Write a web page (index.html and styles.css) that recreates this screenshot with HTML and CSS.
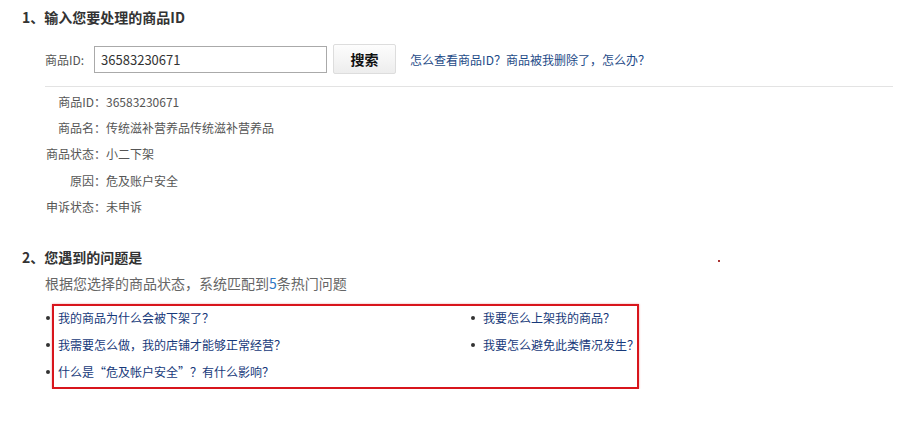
FILE: index.html
```html
<!DOCTYPE html>
<html lang="zh-CN">
<head>
    <meta charset="UTF-8">
    <meta name="viewport" content="width=device-width, initial-scale=1.0">
    <title>商品申诉</title>
    <link rel="stylesheet" href="styles.css">
</head>
<body>
    <div class="page">
        <!-- step 1: search by item id -->
        <h2 class="step">1、输入您要处理的商品ID</h2>

        <form class="search-row" onsubmit="return false">
            <label class="search-label" for="itemId">商品ID:</label>
            <input class="search-input" type="text" id="itemId" value="36583230671">
            <button class="search-btn" type="submit">搜索</button>
            <a class="help" href="#">怎么查看商品ID？</a>
            <a class="help" href="#">商品被我删除了，怎么办？</a>
        </form>

        <!-- item details -->
        <div class="info">
            <div class="info-row"><span class="info-key">商品ID：</span><span class="info-val">36583230671</span></div>
            <div class="info-row"><span class="info-key">商品名：</span><span class="info-val">传统滋补营养品传统滋补营养品</span></div>
            <div class="info-row"><span class="info-key">商品状态：</span><span class="info-val">小二下架</span></div>
            <div class="info-row"><span class="info-key">原因：</span><span class="info-val">危及账户安全</span></div>
            <div class="info-row"><span class="info-key">申诉状态：</span><span class="info-val">未申诉</span></div>
        </div>

        <!-- step 2: matched questions -->
        <h2 class="step step-two">2、您遇到的问题是</h2>
        <p class="match">根据您选择的商品状态，系统匹配到<span class="num">5</span>条热门问题</p>

        <div class="faq">
            <ul class="faq-list">
                <li><a href="#">我的商品为什么会被下架了？</a></li>
                <li><a href="#">我要怎么上架我的商品？</a></li>
                <li><a href="#">我需要怎么做，我的店铺才能够正常经营？</a></li>
                <li><a href="#">我要怎么避免此类情况发生？</a></li>
                <li><a href="#">什么是“危及帐户安全”？有什么影响？</a></li>
            </ul>
            <div class="highlight"></div>
        </div>

        <span class="stray"></span>
    </div>
</body>
</html>
```

FILE: styles.css
```css
* {
    margin: 0px;
    padding: 0px;
    box-sizing: border-box;
}

body {
    background: #fff;
    font-family: "Noto Sans CJK SC", "Liberation Sans", sans-serif;
    font-size: 12px;
    color: #666;
}

.page {
    position: relative;
    padding: 7px 0 0 22px;
}

.step {
    font-size: 14px;
    line-height: 20px;
    font-weight: bold;
    color: #333;
}

/* search */
.search-row {
    display: flex;
    align-items: center;
    height: 30px;
    margin: 17px 0 0 23px;
}

.search-label {
    color: #555;
    margin-right: 10px;
}

.search-input {
    width: 233px;
    height: 27px;
    border: 1px solid #aaa;
    padding-left: 6px;
    font-family: "Noto Sans CJK SC", "Liberation Sans", sans-serif;
    font-size: 13px;
    color: #333;
    outline: none;
}

.search-btn {
    width: 63px;
    height: 30px;
    margin-left: 6px;
    border: 1px solid #ddd;
    border-radius: 2px;
    background: linear-gradient(#fdfdfd, #ededed);
    font-family: "Noto Sans CJK SC", sans-serif;
    font-size: 14px;
    font-weight: bold;
    color: #111;
    cursor: pointer;
}

.help {
    color: #1d4a87;
    text-decoration: none;
}

.help:first-of-type {
    margin-left: 14px;
}

.help:hover {
    text-decoration: underline;
}

/* details */
.info {
    margin: 12px 5px 0 23px;
    padding-top: 2px;
    border-top: 1px solid #e3e3e3;
}

.info-row {
    display: flex;
    line-height: 26.2px;
}

.info-key {
    width: 61px;
    text-align: right;
    color: #555;
}

.info-val {
    color: #555;
}

.step-two {
    margin-top: 27px;
}

.match {
    margin: 6px 0 0 23px;
    font-size: 14px;
    line-height: 20px;
    color: #666;
}

.num {
    color: #2f78c4;
}

/* questions */
.faq {
    position: relative;
    width: 616px;
    margin: 11px 0 0 23px;
    padding-bottom: 4px;
}

.faq-list {
    display: grid;
    grid-template-columns: 425px 1fr;
    list-style: none;
}

.faq-list li {
    display: flex;
    align-items: center;
    height: 27px;
}

.faq-list li::before {
    content: "";
    width: 4px;
    height: 4px;
    margin: 0 8px 0 1px;
    border-radius: 50%;
    background: #333;
}

.faq-list a {
    color: #17397a;
    text-decoration: none;
}

.faq-list a:hover {
    text-decoration: underline;
}

.highlight {
    position: absolute;
    top: 0;
    left: 7px;
    width: 587px;
    height: 85px;
    border: 2px solid #d8151c;
    box-shadow: 0 0 2px rgba(216, 21, 28, 0.4);
    pointer-events: none;
}

.stray {
    position: absolute;
    left: 718px;
    top: 260px;
    width: 2px;
    height: 2px;
    background: #a33;
}
```
